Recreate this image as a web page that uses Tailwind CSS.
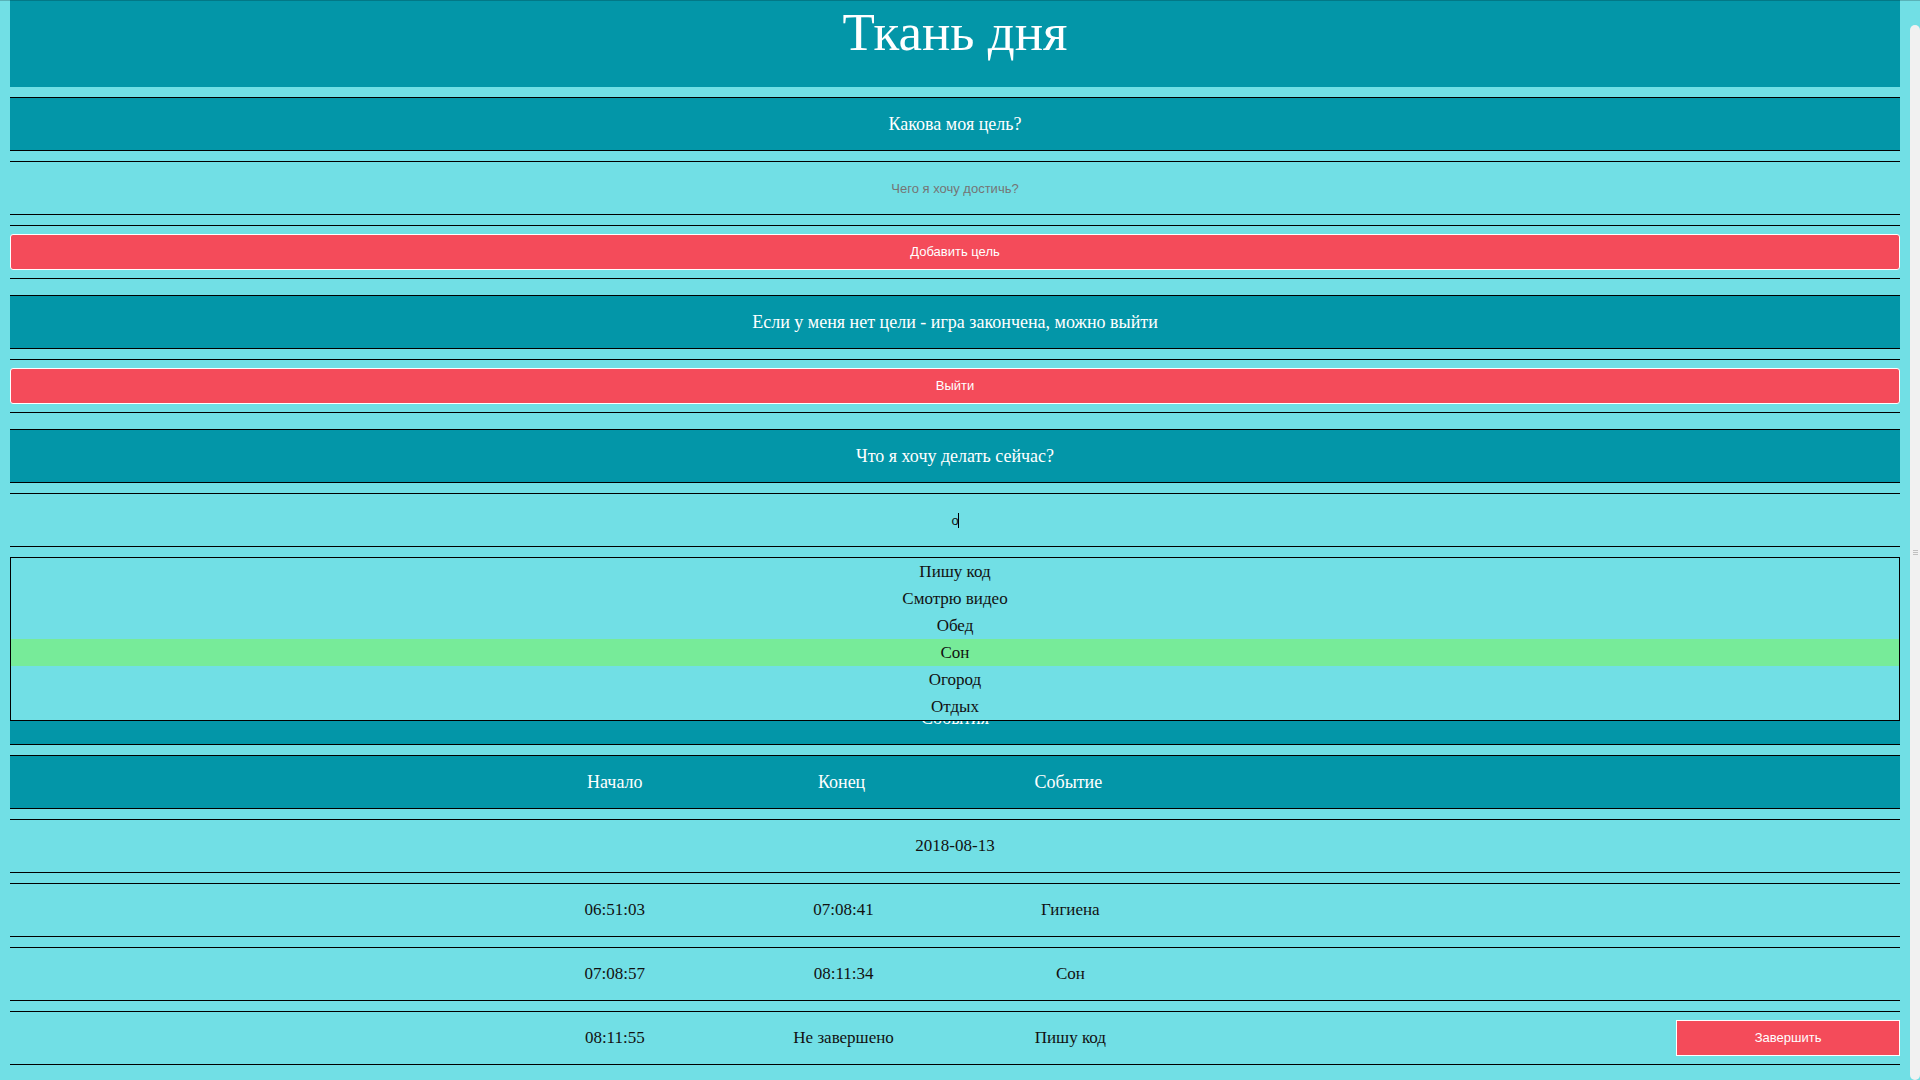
<!DOCTYPE html>
<html lang="ru">
<head>
<meta charset="utf-8">
<meta name="viewport" content="width=device-width, initial-scale=1">
<title>Ткань дня</title>
<script src="https://cdn.jsdelivr.net/npm/@tailwindcss/browser@4"></script>
</head>
<body class="min-h-screen bg-[#71dfe5] font-['Georgia','Liberation_Serif',serif] text-[17px] leading-5 text-[#111]">
<div class="fixed inset-x-0 top-0 z-20 h-px bg-black/20"></div>

<main class="mx-[10px] mr-5 text-center">
  <header class="h-[87px] bg-[#0396a8] pt-1 text-white">
    <h1 class="text-[53px] leading-14">Ткань дня</h1>
  </header>

  <form class="mt-[10px] flex flex-col gap-[10px]">
    <h2 class="flex h-[54px] items-center justify-center border-y border-black bg-[#0396a8] text-[18px] text-white"><label for="goal">Какова моя цель?</label></h2>
    <input id="goal" type="text" placeholder="Чего я хочу достичь?" class="h-[54px] w-full border-y border-black text-center font-['Liberation_Sans',sans-serif] text-[13px] outline-none placeholder:text-[#757575]">
    <div class="flex h-[54px] items-center border-y border-black">
      <button type="button" class="h-9 w-full rounded-[3px] border border-white bg-[#f44b5a] font-['Liberation_Sans',sans-serif] text-[13px] text-white">Добавить цель</button>
    </div>
  </form>

  <section class="mt-4 flex flex-col gap-[10px]">
    <h2 class="flex h-[54px] items-center justify-center border-y border-black bg-[#0396a8] text-[18px] text-white">Если у меня нет цели - игра закончена, можно выйти</h2>
    <div class="flex h-[54px] items-center border-y border-black">
      <button type="button" class="h-9 w-full rounded-[3px] border border-white bg-[#f44b5a] font-['Liberation_Sans',sans-serif] text-[13px] text-white">Выйти</button>
    </div>
  </section>

  <form class="mt-4 flex flex-col gap-[10px]">
    <h2 class="flex h-[54px] items-center justify-center border-y border-black bg-[#0396a8] text-[18px] text-white"><label for="activity">Что я хочу делать сейчас?</label></h2>
    <div class="relative">
      <input id="activity" type="text" value="о" class="block h-[54px] w-full border-y border-black text-center font-['Liberation_Sans',sans-serif] text-[13px] caret-transparent outline-none">
      <span class="absolute top-5 left-1/2 ml-[3px] h-[15px] w-px bg-black"></span>
      <ul class="absolute inset-x-0 top-full z-10 mt-[10px] border border-black bg-[#71dfe5] leading-[27px]">
        <li>Пишу код</li>
        <li>Смотрю видео</li>
        <li>Обед</li>
        <li class="bg-[#77eb99]">Сон</li>
        <li>Огород</li>
        <li>Отдых</li>
      </ul>
    </div>
  </form>

  <table class="mt-[134px] w-full table-fixed border-separate border-spacing-x-0 border-spacing-y-[10px]">
    <colgroup>
      <col class="w-[26%]"><col class="w-[12%]"><col class="w-[12%]"><col class="w-[12%]"><col class="w-[26%]"><col class="w-[12%]">
    </colgroup>
    <thead class="bg-[#0396a8] text-[18px] text-white">
      <tr><th colspan="6" class="h-[54px] border-y border-black p-0 font-normal">События</th></tr>
      <tr>
        <td class="h-[54px] border-y border-black p-0"></td>
        <th class="border-y border-black p-0 font-normal">Начало</th>
        <th class="border-y border-black p-0 font-normal">Конец</th>
        <th class="border-y border-black p-0 font-normal">Событие</th>
        <td class="border-y border-black p-0"></td>
        <td class="border-y border-black p-0"></td>
      </tr>
    </thead>
    <tbody>
      <tr><td colspan="6" class="h-[54px] border-y border-black p-0">2018-08-13</td></tr>
      <tr>
        <td class="h-[54px] border-y border-black p-0"></td>
        <td class="border-y border-black p-0">06:51:03</td>
        <td class="border-y border-black p-0 pl-1">07:08:41</td>
        <td class="border-y border-black p-0 pl-1">Гигиена</td>
        <td class="border-y border-black p-0"></td>
        <td class="border-y border-black p-0"></td>
      </tr>
      <tr>
        <td class="h-[54px] border-y border-black p-0"></td>
        <td class="border-y border-black p-0">07:08:57</td>
        <td class="border-y border-black p-0 pl-1">08:11:34</td>
        <td class="border-y border-black p-0 pl-1">Сон</td>
        <td class="border-y border-black p-0"></td>
        <td class="border-y border-black p-0"></td>
      </tr>
      <tr>
        <td class="h-[54px] border-y border-black p-0"></td>
        <td class="border-y border-black p-0">08:11:55</td>
        <td class="border-y border-black p-0 pl-1">Не завершено</td>
        <td class="border-y border-black p-0 pl-1">Пишу код</td>
        <td class="border-y border-black p-0"></td>
        <td class="border-y border-black p-0 pl-[3px]"><button type="button" class="block h-9 w-full border border-white bg-[#f44b5a] font-['Liberation_Sans',sans-serif] text-[13px] text-white">Завершить</button></td>
      </tr>
    </tbody>
  </table>
</main>

<div class="fixed top-[25px] right-0 bottom-0 flex w-[10px] flex-col items-center justify-center gap-px rounded-full bg-[#f1f1f1]">
  <span class="h-px w-[5px] bg-[#c0c0c0]"></span>
  <span class="h-px w-[5px] bg-[#c0c0c0]"></span>
  <span class="h-px w-[5px] bg-[#c0c0c0]"></span>
</div>
</body>
</html>
